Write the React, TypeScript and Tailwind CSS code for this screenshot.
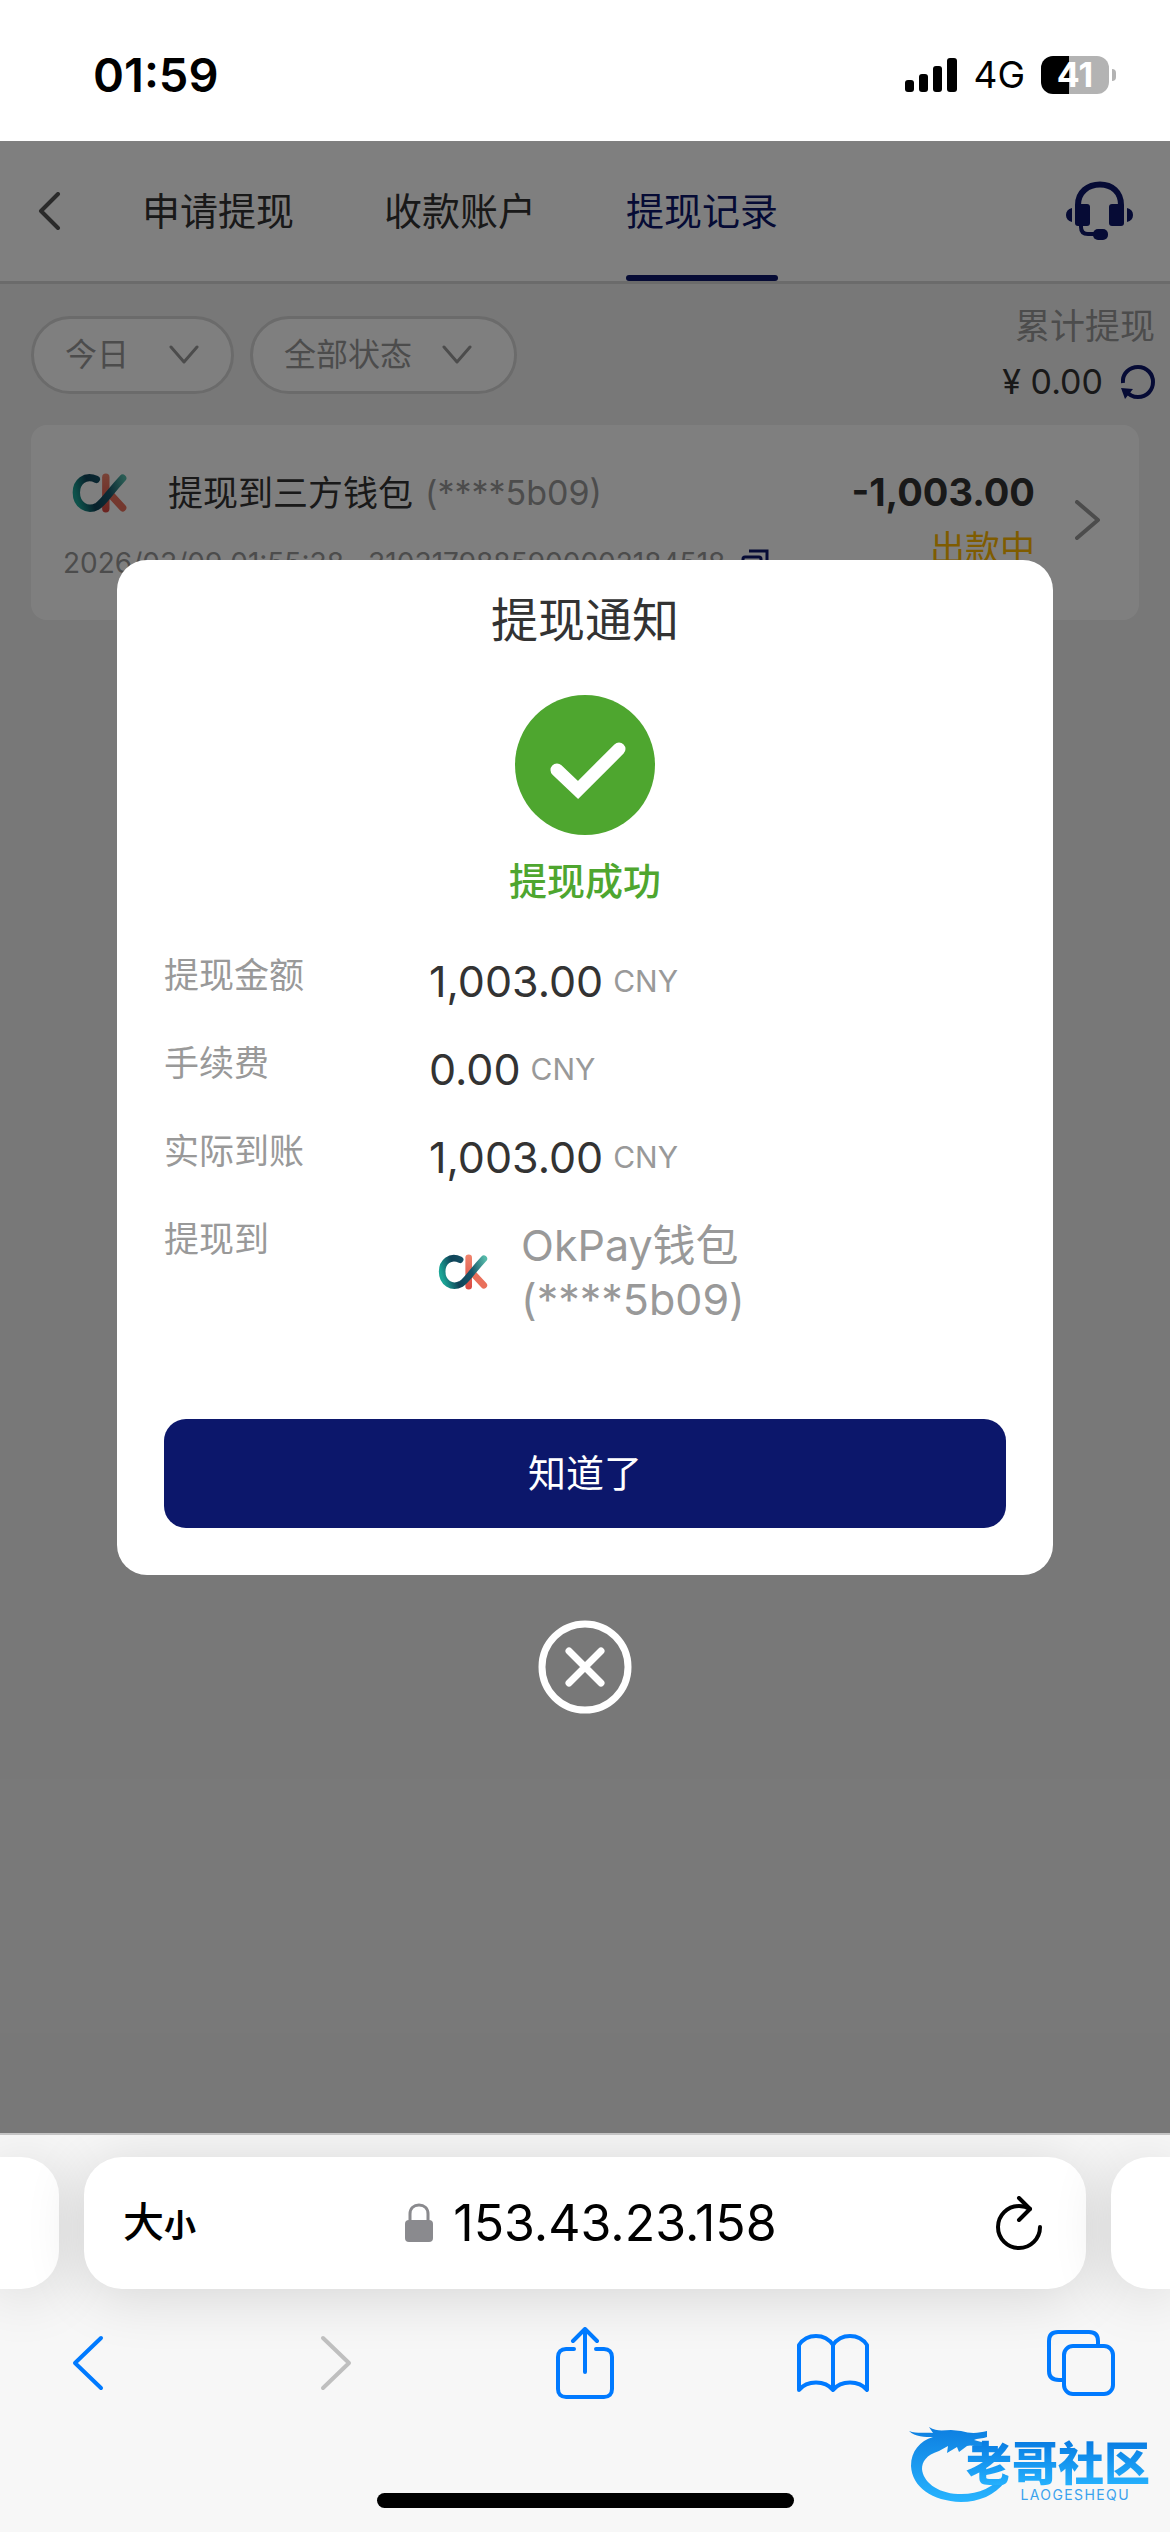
import { useState } from "react";

const SANS = "font-['Inter','Noto_Sans_CJK_SC',sans-serif]";

const tabs = ["申请提现", "收款账户", "提现记录"];

const amounts = [
  { label: "提现金额", value: "1,003.00" },
  { label: "手续费", value: "0.00" },
  { label: "实际到账", value: "1,003.00" },
];

function WalletLogo({ className, id }: { className: string; id: string }) {
  return (
    <svg viewBox="0 0 52 38" className={className} fill="none" strokeLinecap="round" aria-hidden="true">
      <defs>
        <linearGradient id={`${id}-c`} gradientUnits="userSpaceOnUse" x1="2" y1="18" x2="49" y2="4">
          <stop offset="0" stopColor="#1ba596" />
          <stop offset="0.3" stopColor="#0f4358" />
          <stop offset="0.65" stopColor="#17566a" />
          <stop offset="1" stopColor="#55b9a9" />
        </linearGradient>
        <linearGradient id={`${id}-k`} gradientUnits="userSpaceOnUse" x1="32" y1="2" x2="32" y2="36">
          <stop offset="0" stopColor="#f0836c" />
          <stop offset="1" stopColor="#d94a43" />
        </linearGradient>
      </defs>
      <path d="M32 4V34" stroke={`url(#${id}-k)`} strokeWidth="7" />
      <path d="M36 20L48 33" stroke="#e9705c" strokeWidth="7" />
      <path
        d="M23 6C12 1 4 9 4 18.500C4 30 14 37 24 31.500C30 28 34 20 48 5"
        stroke={`url(#${id}-c)`}
        strokeWidth="7"
      />
    </svg>
  );
}

function StatusBar() {
  return (
    <div className="flex h-[141px] items-center justify-between bg-white pt-2 pr-[54px] pl-[93px] text-black">
      <span className="text-[47px] leading-[56px] font-semibold">01:59</span>
      <div className="flex items-center">
        <svg viewBox="0 0 52 34" className="h-[34px] w-[52px]" fill="currentColor" aria-hidden="true">
          <rect x="0" y="22" width="9" height="12" rx="3" />
          <rect x="14" y="16" width="9" height="18" rx="3" />
          <rect x="28" y="8" width="9" height="26" rx="3" />
          <rect x="42" y="0" width="10" height="34" rx="3" />
        </svg>
        <span className="ml-4 text-[37px] leading-[44px]">4G</span>
        <div className="ml-4 flex items-center gap-[3px]">
          <span className="flex h-[38px] w-[68px] items-center justify-center rounded-xl bg-linear-to-r from-black from-41% to-[#b3b3b3] to-41% text-[34px] leading-[38px] font-bold text-white">
            41
          </span>
          <span className="h-3 w-1 rounded-r-full bg-[#b3b3b3]" />
        </div>
      </div>
    </div>
  );
}

function Header() {
  return (
    <header className="flex h-[143px] items-stretch border-b-[3px] border-[#d6d6d6] bg-white pr-9 pl-[37px]">
      <button aria-label="返回" className="flex w-[105px] items-center text-[#555]">
        <svg viewBox="0 0 24 38" className="h-[38px] w-6" fill="none" stroke="currentColor" strokeWidth="4" strokeLinecap="round" strokeLinejoin="round">
          <path d="M21 2L4 19L21 36" />
        </svg>
      </button>
      <nav className="flex flex-1 gap-[90px]">
        {tabs.map((tab) => (
          <a
            key={tab}
            href="#"
            className={
              tab === "提现记录"
                ? "relative flex items-center text-[38px] text-[#0c176b]"
                : "relative flex items-center text-[38px] text-[#333]"
            }
          >
            {tab}
            {tab === "提现记录" && <span className="absolute inset-x-0 bottom-0 h-[6px] rounded-full bg-[#0c176b]" />}
          </a>
        ))}
      </nav>
      <button aria-label="客服" className="flex items-center text-[#0c176b]">
        <svg viewBox="0 0 68 60" className="h-[60px] w-[68px]" fill="currentColor">
          <path d="M12 26V24C12 11 22 3.500 34 3.500S55 11 55 24V26" fill="none" stroke="currentColor" strokeWidth="6" />
          <rect x="9" y="23" width="15" height="22" rx="3" />
          <rect x="43" y="23" width="15" height="22" rx="3" />
          <path d="M6 27V41C2 40 0 37.500 0 34S2 28 6 27Z" />
          <path d="M61 27V41C65 40 67 37.500 67 34S65 28 61 27Z" />
          <path d="M15 44V46C15 51 18 53 22 53H30" fill="none" stroke="currentColor" strokeWidth="4" />
          <rect x="27" y="48" width="15" height="11" rx="5" />
        </svg>
      </button>
    </header>
  );
}

type FilterProps = { label: string; options: string[]; pillWidth: string; selectWidth: string };

function Filter({ label, options, pillWidth, selectWidth }: FilterProps) {
  return (
    <label className={`${pillWidth} flex h-[78px] items-center rounded-full border-[3px] border-[#d6d6d6] bg-white pl-[31px] text-[#999]`}>
      <select aria-label={label} className={`${selectWidth} appearance-none bg-transparent text-[32px] leading-[44px] outline-none`}>
        {options.map((option) => (
          <option key={option}>{option}</option>
        ))}
      </select>
      <svg viewBox="0 0 30 20" className="h-5 w-[30px]" fill="none" stroke="currentColor" strokeWidth="3" strokeLinecap="round" strokeLinejoin="round" aria-hidden="true">
        <path d="M2 2L15 17L28 2" />
      </svg>
    </label>
  );
}

function RecordsPage() {
  return (
    <>
      <Header />
      <div className="flex items-start justify-between pt-4 pr-[15px] pl-[31px]">
        <div className="flex gap-4 pt-4">
          <Filter label="日期" options={["今日"]} pillWidth="w-[203px]" selectWidth="w-[104px]" />
          <Filter label="状态" options={["全部状态"]} pillWidth="w-[267px]" selectWidth="w-[158px]" />
        </div>
        <div className="flex flex-col items-end">
          <span className="text-[35px] leading-[52px] text-[#999]">累计提现</span>
          <span className="flex items-center gap-[18px] text-[34px] leading-[60px] text-[#333]">
            ¥ 0.00
            <button aria-label="刷新" className="text-[#0c176b]">
              <svg viewBox="0 0 34 34" className="h-[34px] w-[34px]" fill="none" stroke="currentColor" strokeWidth="4">
                <path d="M2 18C1 8 9 2 17 2C26 2 32 9 32 17S26 32 17 32C12 32 8 30 5 26" />
                <path d="M0 23L12 24L4 34Z" fill="currentColor" stroke="none" />
              </svg>
            </button>
          </span>
        </div>
      </div>

      <article className="mx-[31px] mt-[13px] flex h-[195px] items-center rounded-2xl bg-white pr-[38px] pb-[6px] pl-8">
        <div className="flex-1 pt-[10px]">
          <div className="flex items-center pl-[9px] text-[35px] leading-[52px]">
            <WalletLogo id="card-logo" className="h-[40px] w-[55px]" />
            <span className="ml-[41px] text-[#333]">提现到三方钱包</span>
            <span className="ml-3 text-[34px] text-[#999]">(****5b09)</span>
          </div>
          <div className="mt-6 flex items-center text-[28px] leading-10 text-[#999]">
            <span>2026/03/09 01:55:38</span>
            <span className="ml-6">3103179885900002184518</span>
            <button aria-label="复制" className="ml-4 text-[#0c176b]">
              <svg viewBox="0 0 28 28" className="h-7 w-7" fill="none" stroke="currentColor" strokeWidth="3">
                <path d="M8 2H26V20" />
                <rect x="2" y="8" width="18" height="18" rx="2" />
              </svg>
            </button>
          </div>
        </div>
        <div className="mr-10 flex flex-col items-end">
          <span className="text-[38px] leading-[52px] font-bold text-[#333]">-1,003.00</span>
          <span className="mt-1 text-[35px] leading-[52px] text-[#ffb800]">出款中</span>
        </div>
        <svg viewBox="0 0 26 40" className="h-10 w-[26px] text-[#999]" fill="none" stroke="currentColor" strokeWidth="4" strokeLinecap="round" strokeLinejoin="round" aria-hidden="true">
          <path d="M2 2L23 20L2 38" />
        </svg>
      </article>
    </>
  );
}

function NoticeDialog({ onClose }: { onClose: () => void }) {
  return (
    <div className="absolute inset-0 flex flex-col items-center justify-center bg-black/50">
      <section role="dialog" aria-label="提现通知" className="w-4/5 rounded-[30px] bg-white px-[47px] pt-7 pb-[47px]">
        <h2 className="text-center text-[47px] leading-[64px] text-[#333]">提现通知</h2>
        <div className="mt-[43px] flex flex-col items-center">
          <svg viewBox="0 0 140 140" className="h-[140px] w-[140px]" aria-hidden="true">
            <circle cx="70" cy="70" r="70" fill="#4ea62f" />
            <path d="M42 75L63 95L104 54" fill="none" stroke="white" strokeWidth="13" strokeLinecap="round" />
          </svg>
          <p className="mt-[18px] text-[38px] leading-[56px] font-medium text-[#4ea62f]">提现成功</p>
        </div>

        <dl className="mt-[42px]">
          {amounts.map(({ label, value }) => (
            <div key={label} className="flex h-[88px] items-start">
              <dt className="w-[265px] text-[35px] leading-[48px] text-[#999]">{label}</dt>
              <dd className="flex items-center text-[43px] leading-[60px] text-[#333]">
                {value}
                <span className="ml-[10px] text-[30px] text-[#999]">CNY</span>
              </dd>
            </div>
          ))}
          <div className="flex">
            <dt className="w-[265px] text-[35px] leading-[48px] text-[#999]">提现到</dt>
            <dd className="flex items-center pt-[3px] text-[43px] leading-[54px] text-[#999]">
              <WalletLogo id="dialog-logo" className="mx-2 h-9 w-[52px]" />
              <span className="ml-6">
                OkPay钱包
                <br />
                (****5b09)
              </span>
            </dd>
          </div>
        </dl>

        <button onClick={onClose} className="mt-[93px] block w-full rounded-[22px] bg-[#0c176b] py-7 text-[38px] leading-[53px] text-white">
          知道了
        </button>
      </section>
      <button onClick={onClose} aria-label="关闭" className="mt-[45px] text-white">
        <svg viewBox="0 0 94 94" className="h-[94px] w-[94px]" fill="none" stroke="currentColor" strokeWidth="7" strokeLinecap="round">
          <circle cx="47" cy="47" r="43" />
          <path d="M31 31L63 63M63 31L31 63" />
        </svg>
      </button>
    </div>
  );
}

function Watermark() {
  return (
    <div className="absolute right-5 bottom-[30px] flex h-[82px] w-[241px] items-start justify-end">
      <svg viewBox="0 0 100 82" className="absolute top-0 left-0 h-[82px] w-[100px]" aria-hidden="true">
        <defs>
          <linearGradient id="dragon" x1="0" y1="0" x2="0" y2="1">
            <stop offset="0" stopColor="#0d7ee0" />
            <stop offset="1" stopColor="#27b4ff" />
          </linearGradient>
        </defs>
        <path
          fill="url(#dragon)"
          d="M0 11C8 14 17 12 24 13L20 7C28 12 35 10 42 10L52 11C62 14 70 13 78 11L78 17C74 19 68 18 65 20L76 23L74 27C68 28 63 24 58 26L50 32L48 27L38 33L39 26L30 31C17 35 13 42 13 49C14 61 27 73 49 74C68 75 84 68 96 54V62C86 75 70 82 52 82C23 81 3 67 2 46C2 31 11 21 24 17C16 17 6 17 0 11Z"
        />
      </svg>
      <div className="relative flex flex-col items-end pt-[18px]">
        <span className="bg-linear-to-b from-[#0878e0] to-[#27b4ff] bg-clip-text text-[46px] leading-[50px] font-black text-transparent">老哥社区</span>
        <span className="pr-5 text-[14px] leading-[14px] tracking-widest text-[#3aa2ee]">LAOGESHEQU</span>
      </div>
    </div>
  );
}

function BrowserBar() {
  return (
    <footer className="relative overflow-hidden border-t-2 border-[#c4c4c4] bg-[#f7f7f7]">
      <div className="flex gap-[25px] pt-[22px]">
        <span className="w-[59px] rounded-r-[38px] bg-white shadow-[0_6px_60px_rgba(0,0,0,0.14)]" />
        <div className="flex h-[132px] flex-1 items-center rounded-[38px] bg-white pr-11 pl-[39px] text-black shadow-[0_6px_60px_rgba(0,0,0,0.14)]">
          <button aria-label="页面设置" className="flex items-baseline font-medium">
            <span className="text-[41px]">大</span>
            <span className="text-[32px] font-bold">小</span>
          </button>
          <div className="flex flex-1 items-center justify-center gap-5 pr-[10px]">
            <svg viewBox="0 0 28 40" className="h-10 w-7 text-[#8a8a8e]" aria-hidden="true">
              <path d="M5 20V11C5 5 9 2 14 2S23 5 23 11V20" fill="none" stroke="currentColor" strokeWidth="3" />
              <rect x="0" y="17" width="28" height="22" rx="4" fill="currentColor" />
            </svg>
            <span className="text-[50px] leading-[62px]">153.43.23.158</span>
          </div>
          <button aria-label="重新载入">
            <svg viewBox="0 0 46 54" className="h-[54px] w-[46px]" fill="none" stroke="currentColor" strokeWidth="4" strokeLinecap="round" strokeLinejoin="round">
              <path d="M44 31A21 21 0 1 1 23 10C27 10 31 11 34 13" />
              <path d="M23 2L34 13L23 24" />
            </svg>
          </button>
        </div>
        <span className="w-[59px] rounded-l-[38px] bg-white shadow-[0_6px_60px_rgba(0,0,0,0.14)]" />
      </div>

      <nav className="flex items-center justify-between pt-[38px] pr-[53px] pl-[52px] text-[#007aff]">
        <button aria-label="后退" className="flex w-[72px] justify-center">
          <svg viewBox="0 0 32 56" className="h-14 w-8" fill="none" stroke="currentColor" strokeWidth="4" strokeLinecap="round" strokeLinejoin="round">
            <path d="M29 3L3 28L29 53" />
          </svg>
        </button>
        <button aria-label="前进" className="flex w-[72px] justify-center text-[#bfbfbf]">
          <svg viewBox="0 0 32 56" className="h-14 w-8" fill="none" stroke="currentColor" strokeWidth="4" strokeLinecap="round" strokeLinejoin="round">
            <path d="M3 3L29 28L3 53" />
          </svg>
        </button>
        <button aria-label="分享" className="flex w-[72px] justify-center">
          <svg viewBox="0 0 58 72" className="h-[72px] w-[58px]" fill="none" stroke="currentColor" strokeWidth="4" strokeLinecap="round" strokeLinejoin="round">
            <path d="M18 22H10C5 22 2 25 2 30V62C2 67 5 70 10 70H48C53 70 56 67 56 62V30C56 25 53 22 48 22H40" />
            <path d="M29 45V3M17 14L29 2L41 14" />
          </svg>
        </button>
        <button aria-label="书签" className="flex w-[72px] justify-center">
          <svg viewBox="0 0 72 60" className="h-[60px] w-[72px]" fill="none" stroke="currentColor" strokeWidth="4" strokeLinecap="round" strokeLinejoin="round">
            <path d="M36 12C28 0 10 0 2 12V57C10 47 28 47 36 57C44 47 62 47 70 57V12C62 0 44 0 36 12ZM36 12V57" />
          </svg>
        </button>
        <button aria-label="标签页" className="flex w-[72px] justify-center">
          <svg viewBox="0 0 68 66" className="h-[66px] w-[68px]" fill="none" stroke="currentColor" strokeWidth="4" strokeLinecap="round" strokeLinejoin="round">
            <path d="M17 50H12C5 50 2 47 2 41V11C2 5 5 2 11 2H42C48 2 51 5 51 11V15" />
            <rect x="17" y="16" width="49" height="48" rx="9" />
          </svg>
        </button>
      </nav>

      <div className="flex justify-center pt-[94px] pb-6">
        <span className="h-[15px] w-[417px] rounded-full bg-black" />
      </div>
      <Watermark />
    </footer>
  );
}

export default function App() {
  const [open, setOpen] = useState(true);

  return (
    <div className={`flex min-h-screen flex-col bg-white ${SANS}`}>
      <StatusBar />
      <main className="relative flex-1 bg-[#f1f1f1]">
        <RecordsPage />
        {open && <NoticeDialog onClose={() => setOpen(false)} />}
      </main>
      <BrowserBar />
    </div>
  );
}
